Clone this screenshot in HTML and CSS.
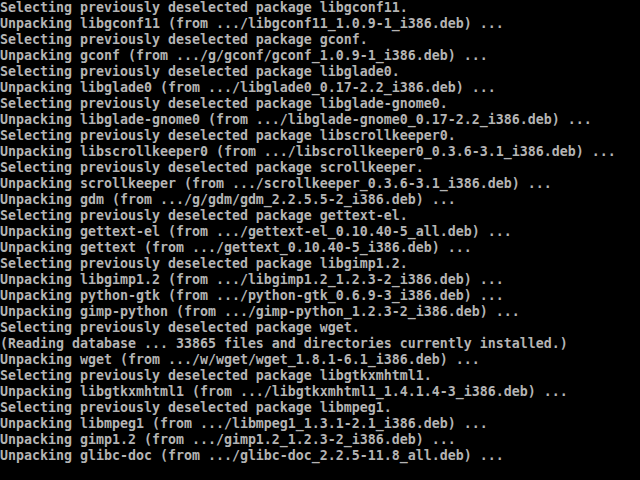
FILE: index.html
```html
<!DOCTYPE html>
<html>
<head>
<meta charset="utf-8">
<link rel="stylesheet" href="styles.css">
</head>
<body>
<pre class="console">Selecting previously deselected package libgconf11.
Unpacking libgconf11 (from .../libgconf11_1.0.9-1_i386.deb) ...
Selecting previously deselected package gconf.
Unpacking gconf (from .../g/gconf/gconf_1.0.9-1_i386.deb) ...
Selecting previously deselected package libglade0.
Unpacking libglade0 (from .../libglade0_0.17-2.2_i386.deb) ...
Selecting previously deselected package libglade-gnome0.
Unpacking libglade-gnome0 (from .../libglade-gnome0_0.17-2.2_i386.deb) ...
Selecting previously deselected package libscrollkeeper0.
Unpacking libscrollkeeper0 (from .../libscrollkeeper0_0.3.6-3.1_i386.deb) ...
Selecting previously deselected package scrollkeeper.
Unpacking scrollkeeper (from .../scrollkeeper_0.3.6-3.1_i386.deb) ...
Unpacking gdm (from .../g/gdm/gdm_2.2.5.5-2_i386.deb) ...
Selecting previously deselected package gettext-el.
Unpacking gettext-el (from .../gettext-el_0.10.40-5_all.deb) ...
Unpacking gettext (from .../gettext_0.10.40-5_i386.deb) ...
Selecting previously deselected package libgimp1.2.
Unpacking libgimp1.2 (from .../libgimp1.2_1.2.3-2_i386.deb) ...
Unpacking python-gtk (from .../python-gtk_0.6.9-3_i386.deb) ...
Unpacking gimp-python (from .../gimp-python_1.2.3-2_i386.deb) ...
Selecting previously deselected package wget.
(Reading database ... 33865 files and directories currently installed.)
Unpacking wget (from .../w/wget/wget_1.8.1-6.1_i386.deb) ...
Selecting previously deselected package libgtkxmhtml1.
Unpacking libgtkxmhtml1 (from .../libgtkxmhtml1_1.4.1.4-3_i386.deb) ...
Selecting previously deselected package libmpeg1.
Unpacking libmpeg1 (from .../libmpeg1_1.3.1-2.1_i386.deb) ...
Unpacking gimp1.2 (from .../gimp1.2_1.2.3-2_i386.deb) ...
Unpacking glibc-doc (from .../glibc-doc_2.2.5-11.8_all.deb) ...</pre>
</body>
</html>
```
FILE: styles.css
```css
html, body {
  margin: 0;
  padding: 0;
  background: #000;
  width: 640px;
  height: 480px;
  overflow: hidden;
}
.console {
  margin: 0;
  padding: 0;
  color: #b4b4b4;
  font-family: "DejaVu Sans Mono", "Liberation Mono", monospace;
  font-size: 13.29px;
  line-height: 16px;
  font-weight: bold;
  white-space: pre;
}
```
